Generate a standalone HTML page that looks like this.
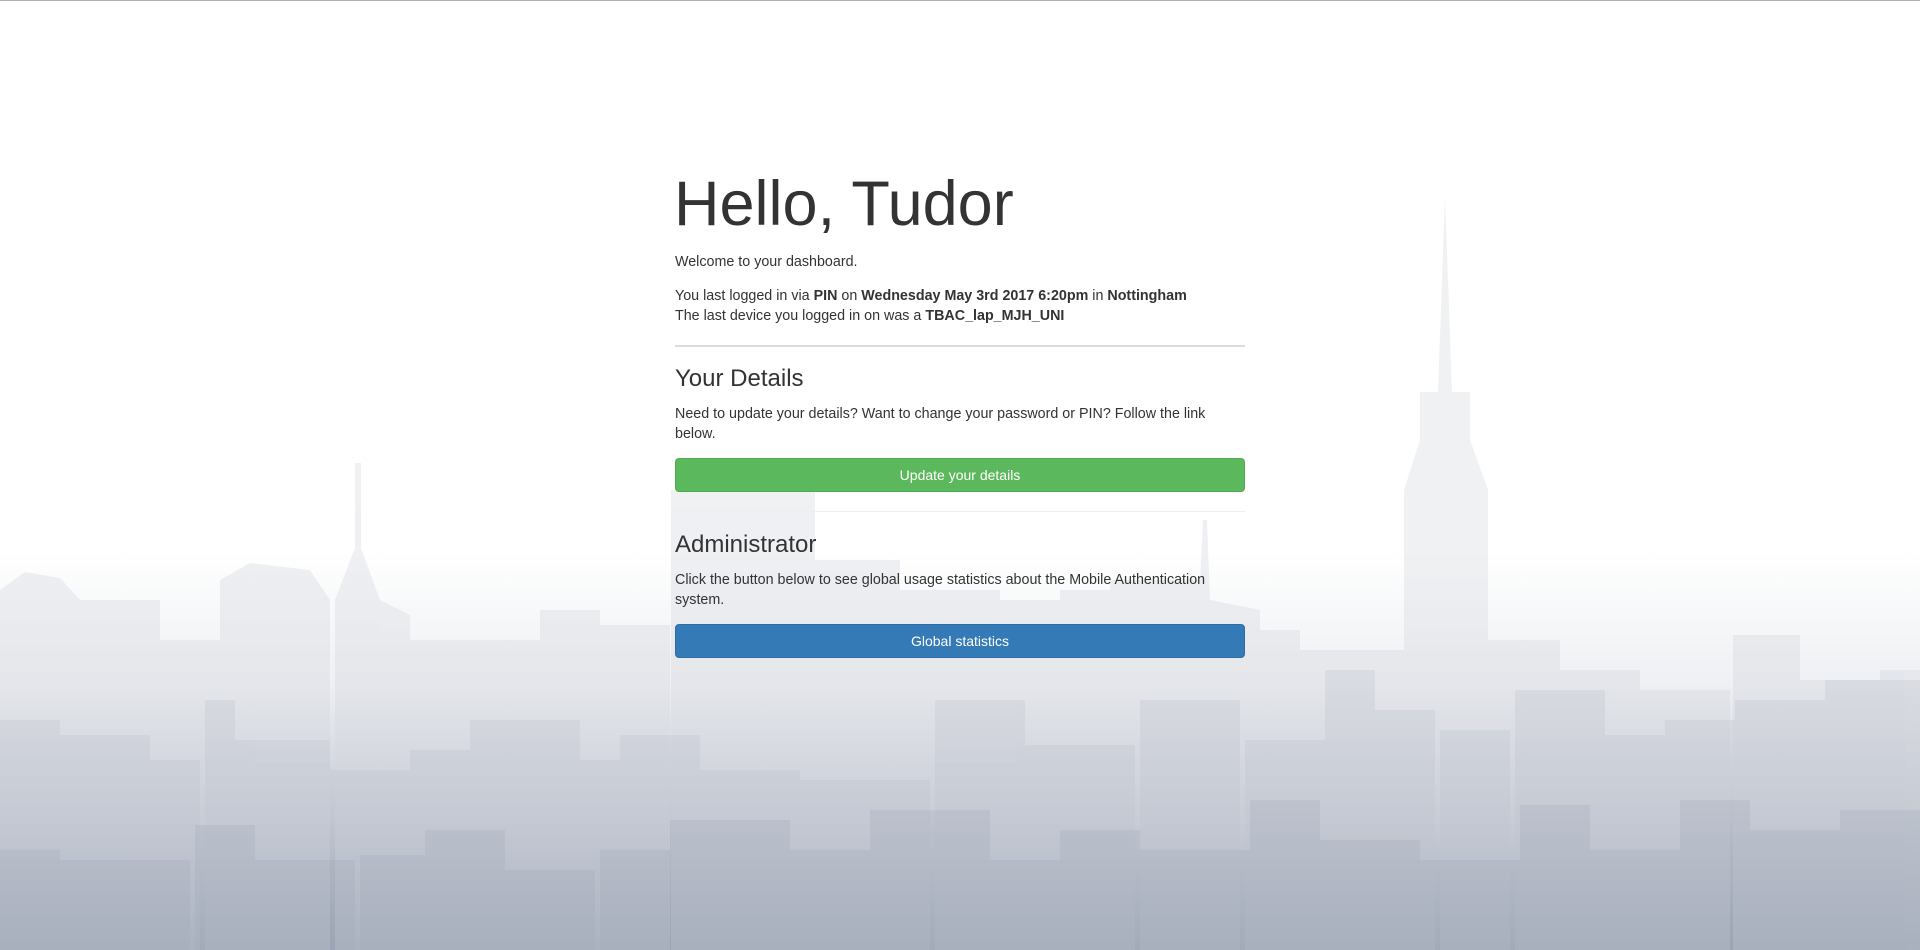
<!DOCTYPE html>
<html><head><meta charset="utf-8"><style>
html,body{margin:0;padding:0;width:1920px;height:950px;overflow:hidden;background:#fff;font-family:"Liberation Sans",Arial,sans-serif;color:#333;}
.topline{position:absolute;left:0;top:0;width:1920px;height:1px;background:#b0b0b0;}
svg.bg{position:absolute;left:0;top:0;}
.c{position:absolute;left:675px;top:0;width:570px;font-size:14.3px;line-height:20px;}
h1{position:absolute;top:164px;left:-1px;margin:0;font-weight:normal;font-size:63px;line-height:80px;color:#333;white-space:nowrap;}
p{margin:0;position:absolute;left:0;width:570px;white-space:nowrap;}
h3{position:absolute;margin:0;font-weight:normal;font-size:24px;line-height:30px;color:#333;}
hr{position:absolute;left:0;width:570px;margin:0;border:0;height:2px;}
.btn{position:absolute;left:0;width:568px;height:32px;border:1px solid;border-radius:4px;color:#fff;text-align:center;line-height:32px;font-size:14px;}
</style></head><body>
<svg class="bg" width="1920" height="950" viewBox="0 0 1920 950">
<defs><linearGradient id="g" x1="0" y1="0" x2="0" y2="1">
<stop offset="0" stop-color="#ffffff"/><stop offset="0.58" stop-color="#ffffff"/>
<stop offset="0.72" stop-color="#eef0f3"/><stop offset="0.86" stop-color="#c3c9d3"/>
<stop offset="1" stop-color="#8a96a8"/></linearGradient></defs>
<rect width="1920" height="950" fill="url(#g)"/>
<g fill="#d4d6de" opacity="0.35">
<polygon points="0,590 25,572 60,578 80,600 80,950 0,950"/>
<rect x="80" y="600" width="80" height="350"/><rect x="160" y="640" width="60" height="310"/>
<polygon points="220,580 250,563 310,570 330,600 330,950 220,950"/>
<rect x="355" y="463" width="6" height="120"/><polygon points="335,600 358,540 380,600 410,615 410,950 335,950"/>
<rect x="410" y="640" width="130" height="310"/><rect x="540" y="610" width="60" height="340"/>
<rect x="600" y="625" width="70" height="325"/><rect x="671" y="490" width="144" height="460"/>
<rect x="815" y="560" width="85" height="390"/><rect x="900" y="590" width="100" height="360"/>
<rect x="1000" y="600" width="60" height="350"/><rect x="1060" y="590" width="50" height="360"/>
<polygon points="1110,580 1200,580 1203,520 1207,520 1210,600 1260,610 1260,950 1110,950"/>
<rect x="1260" y="630" width="40" height="320"/><rect x="1300" y="650" width="104" height="300"/>
<polygon points="1420,392 1438,392 1445,196 1452,392 1470,392 1470,440 1488,490 1488,950 1404,950 1404,490 1420,440"/>
<rect x="1488" y="640" width="72" height="310"/><rect x="1560" y="670" width="80" height="280"/>
<rect x="1640" y="690" width="90" height="260"/><rect x="1733" y="635" width="67" height="315"/>
<rect x="1800" y="680" width="80" height="270"/><rect x="1880" y="670" width="40" height="280"/>
</g>
<g fill="#bfc3ce" opacity="0.3">
<rect x="0" y="720" width="60" height="230"/><rect x="60" y="735" width="90" height="215"/>
<rect x="150" y="760" width="50" height="190"/><rect x="205" y="700" width="30" height="250"/>
<rect x="235" y="740" width="95" height="210"/><rect x="330" y="770" width="80" height="180"/>
<rect x="410" y="750" width="60" height="200"/><rect x="470" y="720" width="110" height="230"/>
<rect x="580" y="760" width="90" height="190"/><rect x="620" y="735" width="80" height="215"/>
<rect x="700" y="770" width="100" height="180"/><rect x="800" y="780" width="130" height="170"/>
<rect x="935" y="700" width="90" height="250"/><rect x="1025" y="745" width="110" height="205"/>
<rect x="1140" y="700" width="100" height="250"/><rect x="1245" y="740" width="80" height="210"/>
<rect x="1325" y="670" width="50" height="280"/><rect x="1375" y="710" width="60" height="240"/>
<rect x="1440" y="730" width="70" height="220"/><rect x="1515" y="690" width="90" height="260"/>
<rect x="1605" y="735" width="60" height="215"/><rect x="1665" y="720" width="70" height="230"/>
<rect x="1735" y="700" width="90" height="250"/><rect x="1825" y="680" width="95" height="270"/>
</g>
<g fill="#a0a8b7" opacity="0.25">
<rect x="0" y="850" width="60" height="100"/><rect x="60" y="860" width="130" height="90"/>
<rect x="195" y="825" width="60" height="125"/><rect x="255" y="860" width="100" height="90"/>
<rect x="360" y="855" width="90" height="95"/><rect x="425" y="830" width="80" height="120"/>
<rect x="505" y="870" width="90" height="80"/><rect x="600" y="850" width="70" height="100"/>
<rect x="670" y="820" width="120" height="130"/><rect x="790" y="850" width="80" height="100"/>
<rect x="870" y="810" width="120" height="140"/><rect x="990" y="860" width="70" height="90"/>
<rect x="1060" y="830" width="80" height="120"/><rect x="1140" y="850" width="110" height="100"/>
<rect x="1250" y="800" width="70" height="150"/><rect x="1320" y="840" width="100" height="110"/>
<rect x="1420" y="860" width="100" height="90"/><rect x="1520" y="805" width="70" height="145"/>
<rect x="1590" y="850" width="90" height="100"/><rect x="1680" y="800" width="70" height="150"/>
<rect x="1750" y="830" width="90" height="120"/><rect x="1840" y="810" width="80" height="140"/>
</g>
</svg>
<div class="topline"></div>
<div class="c">
<h1>Hello, Tudor</h1>
<p style="top:252px">Welcome to your dashboard.</p>
<p style="top:286px">You last logged in via <b>PIN</b> on <b>Wednesday May 3rd 2017 6:20pm</b> in <b>Nottingham</b><br>The last device you logged in on was a <b>TBAC_lap_MJH_UNI</b></p>
<hr style="top:345px;background:#dcdcdc;">
<h3 style="top:364px">Your Details</h3>
<p style="top:404px">Need to update your details? Want to change your password or PIN? Follow the link<br>below.</p>
<div class="btn" style="top:458px;background:#5cb85c;border-color:#4cae4c;">Update your details</div>
<hr style="top:511px;background:#eeeeee;height:1px;">
<h3 style="top:530px">Administrator</h3>
<p style="top:570px">Click the button below to see global usage statistics about the Mobile Authentication<br>system.</p>
<div class="btn" style="top:624px;background:#337ab7;border-color:#2e6da4;">Global statistics</div>
</div>
</body></html>
